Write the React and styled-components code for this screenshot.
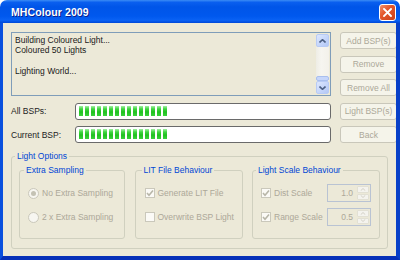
import React from 'react';
import styled, { createGlobalStyle } from 'styled-components';

const Global = createGlobalStyle`
  html, body { margin: 0; padding: 0; background: #ffffff; }
  body { font-family: "Liberation Sans", Arial, sans-serif; font-size: 8.5px; }
  * { box-sizing: border-box; }
`;

const Window = styled.div`
  width: 400px;
  height: 260px;
  display: flex;
  flex-direction: column;
`;

const TitleBar = styled.div`
  flex: none;
  height: 23px;
  display: flex;
  align-items: center;
  justify-content: space-between;
  padding: 0 4px 0 11px;
  border-radius: 7px 7px 0 0;
  background: linear-gradient(
    to bottom,
    #3b8cf5 0%,
    #0a5fef 10%,
    #0055e8 30%,
    #0058ee 70%,
    #0a62f4 88%,
    #0048d8 100%
  );
`;

const Title = styled.span`
  color: #ffffff;
  font-family: "Liberation Sans", Arial, sans-serif;
  font-weight: bold;
  font-size: 10.5px;
  letter-spacing: 0.1px;
  text-shadow: 1px 1px 0 #0a1e8c;
`;

const CloseButton = styled.div`
  width: 17px;
  height: 17px;
  margin-top: 2px;
  border: 1px solid #ffffff;
  border-radius: 3px;
  background: linear-gradient(to bottom right, #f0906c 0%, #e4582c 40%, #c9401a 100%);
  display: flex;
  align-items: center;
  justify-content: center;
`;

const Body = styled.div`
  flex: 1;
  background: #ece9d8;
  border-left: 3px solid #0a50de;
  border-right: 4px solid #0840c8;
  border-bottom: 4px solid #0630b8;
  padding: 9px 8px 0 8px;
  overflow: hidden;
`;

const TopGrid = styled.div`
  display: grid;
  grid-template-columns: 55px 256px 57px;
  grid-template-rows: repeat(5, 17px);
  column-gap: 9px;
  row-gap: 6.5px;
`;

const LogBox = styled.div`
  grid-column: 1 / 3;
  grid-row: 1 / 4;
  border: 1px solid #7f9db9;
  display: flex;
  background: #ece9d8;
`;

const LogText = styled.div`
  flex: 1;
  padding: 2px 3px;
  line-height: 10.4px;
  color: #1a1a1a;
  white-space: pre;
`;

const ScrollBar = styled.div`
  width: 14px;
  padding: 1px 1px 1px 0;
  display: flex;
  flex-direction: column;
`;

const ScrollArrow = styled.div`
  height: 13px;
  flex: none;
  border: 1px solid #b8cbf5;
  border-radius: 2px;
  background: linear-gradient(to bottom right, #dde7fd 0%, #c3d4fa 60%, #b3c8f5 100%);
  display: flex;
  align-items: center;
  justify-content: center;
`;

const Track = styled.div`
  flex: 1;
  background: linear-gradient(to right, #eeede5 0%, #f6f5f0 40%, #f3f1ea 100%);
  display: flex;
  flex-direction: column;
  justify-content: flex-end;
`;

const Thumb = styled.div`
  height: 5px;
  border: 1px solid #a9bfee;
  border-radius: 2px;
  background: #c6d6fb;
`;

const Label = styled.div`
  grid-column: 1;
  grid-row: ${p => p.$row};
  display: flex;
  align-items: center;
  color: #222;
`;

const Progress = styled.div`
  grid-column: 2;
  grid-row: ${p => p.$row};
  border: 1px solid #6a6a6a;
  border-radius: 3px;
  background: #ffffff;
  padding: 2px 3px;
  display: flex;
  gap: 2px;
`;

const Block = styled.span`
  width: 4px;
  height: 10px;
  background: linear-gradient(to bottom, #a4f0a4 0%, #3fd53f 30%, #20c020 60%, #3ad23a 100%);
`;

const Button = styled.div`
  grid-column: 3;
  grid-row: ${p => p.$row};
  border: 1px solid #c9c7ba;
  border-radius: 3px;
  background: #f5f4ea;
  color: #aca899;
  display: flex;
  align-items: center;
  justify-content: center;
`;

const Options = styled.fieldset`
  margin: 8px 0 0 0;
  padding: 4px 7px 9px 7px;
  border: 1px solid #d0d0bf;
  border-radius: 3px;
  min-width: 0;
  display: grid;
  grid-template-columns: 106px 108px 128px;
  justify-content: space-between;
`;

const Legend = styled.legend`
  padding: 0 2px;
  margin-left: ${p => p.$ml || -4}px;
  color: #0046d5;
  font-size: 8.5px;
  line-height: 10px;
`;

const Group = styled.fieldset`
  margin: 0;
  padding: 9px 8px 12px ${p => p.$pl || 8}px;
  border: 1px solid #d0d0bf;
  border-radius: 3px;
  min-width: 0;
  display: grid;
  grid-auto-rows: 18px;
  row-gap: 6px;
`;

const Row = styled.div`
  display: flex;
  align-items: center;
  justify-content: ${p => (p.$spread ? 'space-between' : 'flex-start')};
`;

const Choice = styled.div`
  display: flex;
  align-items: center;
  gap: 3px;
  color: #aca899;
  white-space: nowrap;
`;

const Radio = styled.span`
  width: 11px;
  height: 11px;
  border-radius: 50%;
  border: 1px solid #cac8bb;
  background: #f7f6f1;
  display: flex;
  align-items: center;
  justify-content: center;
  &::after {
    content: '';
    width: 5px;
    height: 5px;
    border-radius: 50%;
    background: ${p => (p.$checked ? '#c4c2b4' : 'transparent')};
  }
`;

const Check = styled.span`
  width: 10px;
  height: 10px;
  border: 1px solid #cac8bb;
  background: #fbfaf6;
  display: flex;
  align-items: center;
  justify-content: center;
`;

const Spin = styled.div`
  width: 44px;
  height: 18px;
  border: 1px solid #b9c3d3;
  background: #ece9d8;
  display: flex;
  align-items: stretch;
`;

const SpinValue = styled.div`
  flex: 1;
  display: flex;
  align-items: center;
  justify-content: flex-end;
  padding-right: 4px;
  color: #aca899;
`;

const SpinButtons = styled.div`
  width: 12px;
  margin: 1px 1px 1px 0;
  display: flex;
  flex-direction: column;
  gap: 1px;
`;

const SpinHalf = styled.div`
  flex: 1;
  background: #f4f3ee;
  border: 1px solid #e2e0d4;
  border-radius: 1px;
  display: flex;
  align-items: center;
  justify-content: center;
`;

const Chevron = ({ up, color = '#4d6185', w = 7, h = 4, sw = 1.6 }) => (
  <svg width={w} height={h} viewBox="0 0 7 4">
    <polyline
      points={up ? '0.5,3.5 3.5,0.7 6.5,3.5' : '0.5,0.5 3.5,3.3 6.5,0.5'}
      fill="none"
      stroke={color}
      strokeWidth={sw}
    />
  </svg>
);

const Tick = () => (
  <svg width="8" height="8" viewBox="0 0 8 8">
    <polyline points="1,4 3,6.2 7,1.5" fill="none" stroke="#b8b6a8" strokeWidth="1.6" />
  </svg>
);

const Bar = ({ row, blocks }) => (
  <Progress $row={row}>
    {Array.from({ length: blocks }).map((_, i) => (
      <Block key={i} />
    ))}
  </Progress>
);

const SpinBox = ({ value }) => (
  <Spin>
    <SpinValue>{value}</SpinValue>
    <SpinButtons>
      <SpinHalf>
        <Chevron up color="#cfcdc2" w={6} h={3} sw={1.2} />
      </SpinHalf>
      <SpinHalf>
        <Chevron color="#cfcdc2" w={6} h={3} sw={1.2} />
      </SpinHalf>
    </SpinButtons>
  </Spin>
);

export default function App() {
  return (
    <>
      <Global />
      <Window>
        <TitleBar>
          <Title>MHColour 2009</Title>
          <CloseButton>
            <svg width="9" height="9" viewBox="0 0 9 9">
              <path d="M1 1 L8 8 M8 1 L1 8" stroke="#ffffff" strokeWidth="1.9" strokeLinecap="square" />
            </svg>
          </CloseButton>
        </TitleBar>
        <Body>
          <TopGrid>
            <LogBox>
              <LogText>{'Building Coloured Light...\nColoured 50 Lights\n\nLighting World...'}</LogText>
              <ScrollBar>
                <ScrollArrow>
                  <Chevron up />
                </ScrollArrow>
                <Track>
                  <Thumb />
                </Track>
                <ScrollArrow>
                  <Chevron />
                </ScrollArrow>
              </ScrollBar>
            </LogBox>
            <Button $row={1}>Add BSP(s)</Button>
            <Button $row={2}>Remove</Button>
            <Button $row={3}>Remove All</Button>
            <Label $row={4}>All BSPs:</Label>
            <Bar row={4} blocks={15} />
            <Button $row={4}>Light BSP(s)</Button>
            <Label $row={5}>Current BSP:</Label>
            <Bar row={5} blocks={15} />
            <Button $row={5}>Back</Button>
          </TopGrid>
          <Options>
            <Legend>Light Options</Legend>
            <Group>
              <Legend>Extra Sampling</Legend>
              <Row>
                <Choice>
                  <Radio $checked />
                  No Extra Sampling
                </Choice>
              </Row>
              <Row>
                <Choice>
                  <Radio />
                  2 x Extra Sampling
                </Choice>
              </Row>
            </Group>
            <Group $pl={9}>
              <Legend $ml={-3}>LIT File Behaviour</Legend>
              <Row>
                <Choice>
                  <Check>
                    <Tick />
                  </Check>
                  Generate LIT File
                </Choice>
              </Row>
              <Row>
                <Choice>
                  <Check />
                  Overwrite BSP Light
                </Choice>
              </Row>
            </Group>
            <Group $pl={8}>
              <Legend $ml={-5}>Light Scale Behaviour</Legend>
              <Row $spread>
                <Choice>
                  <Check>
                    <Tick />
                  </Check>
                  Dist Scale
                </Choice>
                <SpinBox value="1.0" />
              </Row>
              <Row $spread>
                <Choice>
                  <Check>
                    <Tick />
                  </Check>
                  Range Scale
                </Choice>
                <SpinBox value="0.5" />
              </Row>
            </Group>
          </Options>
        </Body>
      </Window>
    </>
  );
}
